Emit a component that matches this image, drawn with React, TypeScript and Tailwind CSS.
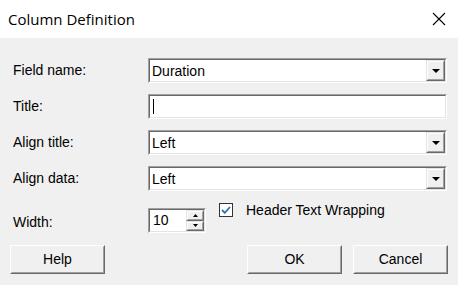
import React from 'react';

const ui = { fontFamily: '"Liberation Sans", Arial, sans-serif' };

const Sunken: React.FC<{ className?: string; children?: React.ReactNode }> = ({ className = '', children }) => (
  <div className={`border border-t-[#a0a0a0] border-l-[#a0a0a0] border-b-white border-r-white ${className}`}>
    <div className="h-full border border-t-[#696969] border-l-[#696969] border-b-[#e3e3e3] border-r-[#e3e3e3] bg-white flex items-center">
      {children}
    </div>
  </div>
);

const Raised: React.FC<{ className?: string; children?: React.ReactNode }> = ({ className = '', children }) => (
  <div className={`border border-t-[#e3e3e3] border-l-[#e3e3e3] border-b-[#696969] border-r-[#696969] bg-[#f0f0f0] ${className}`}>
    <div className="h-full border border-t-white border-l-white border-b-[#a0a0a0] border-r-[#a0a0a0] flex items-center justify-center">
      {children}
    </div>
  </div>
);

const Arrow: React.FC<{ up?: boolean; size?: number }> = ({ up, size = 7 }) => (
  <svg width={size} height={Math.ceil(size / 2)} viewBox={`0 0 ${size} ${Math.ceil(size / 2)}`}>
    {up ? (
      <polygon points={`0,${Math.ceil(size / 2)} ${size},${Math.ceil(size / 2)} ${size / 2},0`} fill="#000" />
    ) : (
      <polygon points={`0,0 ${size},0 ${size / 2},${Math.ceil(size / 2)}`} fill="#000" />
    )}
  </svg>
);

const Combo: React.FC<{ value: string }> = ({ value }) => (
  <Sunken className="w-[299px] h-[25px]">
    <span className="flex-1 pl-[2px] text-[14px] text-black leading-none">{value}</span>
    <Raised className="w-[19px] h-full">
      <Arrow size={8} />
    </Raised>
  </Sunken>
);

const Row: React.FC<{ label: string; children: React.ReactNode }> = ({ label, children }) => (
  <div className="flex items-center">
    <span className="w-[135px] text-[14px] text-black">{label}</span>
    {children}
  </div>
);

const Btn: React.FC<{ label: string }> = ({ label }) => (
  <div className="w-[95px] h-[29px] border border-t-white border-l-white border-b-[#696969] border-r-[#696969] bg-[#f0f0f0]">
    <div className="h-full border border-t-[#f0f0f0] border-l-[#f0f0f0] border-b-[#a0a0a0] border-r-[#a0a0a0] flex items-center justify-center text-[14px] text-black">
      {label}
    </div>
  </div>
);

export default function App() {
  return (
    <div className="w-[458px] h-[285px] bg-[#f0f0f0] flex flex-col" style={ui}>
      <div className="h-[38px] bg-white flex items-center justify-between pl-[8px] pr-[12px]">
        <span className="text-[15px] text-black" style={{ fontFamily: '"Open Sans", sans-serif' }}>
          Column Definition
        </span>
        <svg width="14" height="14" viewBox="0 0 14 14">
          <path d="M1 1 L13 13 M13 1 L1 13" stroke="#000" strokeWidth="1.1" />
        </svg>
      </div>

      <div className="flex flex-col pl-[13px] pt-[20px] gap-[11px]">
        <Row label="Field name:">
          <Combo value="Duration" />
        </Row>
        <Row label="Title:">
          <Sunken className="w-[299px] h-[25px]">
            <span className="ml-[3px] w-px h-[15px] bg-black" />
          </Sunken>
        </Row>
        <Row label="Align title:">
          <Combo value="Left" />
        </Row>
        <Row label="Align data:">
          <Combo value="Left" />
        </Row>
      </div>

      <div className="flex pl-[13px] mt-[12px]">
        <span className="w-[135px] text-[14px] text-black pt-[9px]">Width:</span>
        <div className="mt-[5px] flex border border-t-[#a0a0a0] border-l-[#a0a0a0] border-b-white border-r-white h-[25px] w-[58px]">
          <div className="flex-1 flex border border-t-[#696969] border-l-[#696969] border-b-[#e3e3e3] border-r-[#e3e3e3] bg-white">
            <span className="flex-1 pl-[3px] text-[14px] text-black flex items-center">10</span>
            <div className="w-[18px] flex flex-col">
              <Raised className="flex-1">
                <Arrow up size={5} />
              </Raised>
              <Raised className="flex-1">
                <Arrow size={5} />
              </Raised>
            </div>
          </div>
        </div>
        <div className="ml-[13px] flex items-start gap-[13px]">
          <div className="w-[14px] h-[14px] border border-[#333] bg-white flex items-center justify-center">
            <svg width="10" height="8" viewBox="0 0 10 8">
              <path d="M1 4 L3.8 6.8 L9 1" stroke="#2c6db5" strokeWidth="1.8" fill="none" />
            </svg>
          </div>
          <span className="text-[14px] text-black leading-none">Header Text Wrapping</span>
        </div>
      </div>

      <div className="flex pl-[10px] pr-[10px] mt-[12px]">
        <Btn label="Help" />
        <div className="flex-1" />
        <div className="flex gap-[11px]">
          <Btn label="OK" />
          <Btn label="Cancel" />
        </div>
      </div>
    </div>
  );
}
